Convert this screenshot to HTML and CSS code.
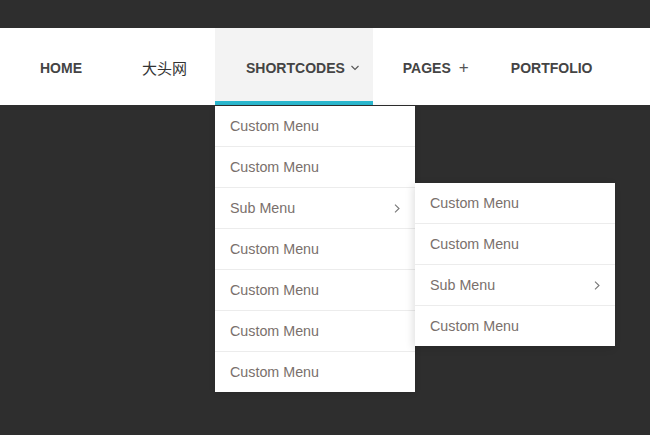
FILE: index.html
```html
<html lang="en">

<head>
    <meta charset="UTF-8" />
    <meta name="viewport" content="width=device-width, initial-scale=1.0" />
    <title>Menu</title>
    <link rel="stylesheet" href="styles.css">
</head>

<body>
    <div class="topbar"></div>
    <nav class="navbar">
        <ul class="nav_list">
            <li class="nav_item"><a href="#">HOME</a></li>
            <li class="nav_item cjk"><a href="#">大头网</a></li>
            <li class="nav_item active">
                <a href="#">SHORTCODES</a>
                <svg class="chev_down" width="8" height="6" viewBox="0 0 8 6"><path d="M0.5 1 L4 4.5 L7.5 1" fill="none" stroke="#555" stroke-width="1.1"/></svg>
                <ul class="dropdown">
                    <li class="drop_item"><a href="#">Custom Menu</a></li>
                    <li class="drop_item"><a href="#">Custom Menu</a></li>
                    <li class="drop_item has_sub">
                        <a href="#">Sub Menu</a>
                        <svg class="chev_right" width="6" height="9" viewBox="0 0 6 9"><path d="M1 0.7 L5 4.5 L1 8.3" fill="none" stroke="#777" stroke-width="1.1"/></svg>
                        <ul class="dropdown sub_dropdown">
                            <li class="drop_item"><a href="#">Custom Menu</a></li>
                            <li class="drop_item"><a href="#">Custom Menu</a></li>
                            <li class="drop_item has_sub">
                                <a href="#">Sub Menu</a>
                                <svg class="chev_right" width="6" height="9" viewBox="0 0 6 9"><path d="M1 0.7 L5 4.5 L1 8.3" fill="none" stroke="#777" stroke-width="1.1"/></svg>
                            </li>
                            <li class="drop_item"><a href="#">Custom Menu</a></li>
                        </ul>
                    </li>
                    <li class="drop_item"><a href="#">Custom Menu</a></li>
                    <li class="drop_item"><a href="#">Custom Menu</a></li>
                    <li class="drop_item"><a href="#">Custom Menu</a></li>
                    <li class="drop_item"><a href="#">Custom Menu</a></li>
                </ul>
            </li>
            <li class="nav_item"><a href="#">PAGES</a><span class="plus">+</span></li>
            <li class="nav_item"><a href="#">PORTFOLIO</a></li>
        </ul>
    </nav>
</body>

</html>
```

FILE: styles.css
```css
body {
    margin: 0;
    background: #2e2e2e;
    font-family: "Liberation Sans", Arial, sans-serif;
}

ul {
    list-style: none;
    margin: 0;
    padding: 0;
}

a {
    text-decoration: none;
}

.topbar {
    height: 28px;
}

.navbar {
    background: #fff;
    height: 77px;
}

.nav_list {
    display: flex;
    height: 100%;
    padding-left: 10px;
}

.nav_item {
    position: relative;
    display: flex;
    align-items: center;
    padding: 2px 30px 0 30px;
}

.nav_item > a {
    color: #444;
    font-size: 14px;
    font-weight: bold;
}

.nav_item.cjk > a {
    font-family: "Noto Sans CJK SC", sans-serif;
    font-weight: normal;
    font-size: 15px;
    color: #333;
}

.nav_item.active {
    background: #f3f3f3;
    box-shadow: inset 0 -4px 0 #2bb8cf;
    margin-left: -2px;
    padding-left: 31px;
    padding-right: 28px;
}

.chev_down {
    position: absolute;
    right: 14px;
    top: 37px;
}

.plus {
    position: absolute;
    right: 12px;
    color: #555;
    font-size: 17px;
    font-weight: normal;
    top: 30px;
}

.dropdown {
    position: absolute;
    top: calc(100% + 1px);
    left: 0;
    width: 200px;
    background: #fff;
    box-shadow: 0 1px 6px rgba(0, 0, 0, 0.12);
    z-index: 5;
}

.drop_item {
    position: relative;
    height: 40px;
    display: flex;
    align-items: center;
    padding-left: 15px;
    border-bottom: 1px solid #ececec;
}

.drop_item:last-child {
    border-bottom: none;
}

.drop_item > a {
    color: #7a706c;
    font-size: 14.3px;
}

.chev_right {
    position: absolute;
    right: 15px;
    top: 16px;
}

.sub_dropdown {
    top: -5px;
    left: 100%;
    box-shadow: -2px 2px 8px rgba(0, 0, 0, 0.12);
}
```
